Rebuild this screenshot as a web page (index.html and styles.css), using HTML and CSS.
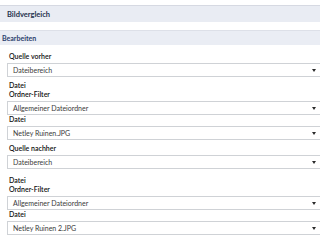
FILE: index.html
```html
<!DOCTYPE html>
<html lang="de">
<head>
<meta charset="utf-8">
<title>Bildvergleich</title>
<link rel="stylesheet" href="styles.css">
</head>
<body>
<div class="panel-head">Bildvergleich</div>
<div class="section-head">Bearbeiten</div>
<div class="form">
  <div class="field">
    <div class="lbl">Quelle vorher</div>
    <div class="select"><span>Dateibereich</span><svg class="chev" width="4" height="3" viewBox="0 0 4 3"><path d="M0 0 H4 L2 3 Z" fill="#2a2a2a"/></svg></div>
  </div>
  <div class="group">
    <div class="lbl">Datei</div>
    <div class="field">
      <div class="lbl">Ordner-Filter</div>
      <div class="select"><span>Allgemeiner Dateiordner</span><svg class="chev" width="4" height="3" viewBox="0 0 4 3"><path d="M0 0 H4 L2 3 Z" fill="#2a2a2a"/></svg></div>
    </div>
    <div class="field">
      <div class="lbl">Datei</div>
      <div class="select"><span>Netley Ruinen.JPG</span><svg class="chev" width="4" height="3" viewBox="0 0 4 3"><path d="M0 0 H4 L2 3 Z" fill="#2a2a2a"/></svg></div>
    </div>
  </div>
  <div class="field">
    <div class="lbl">Quelle nachher</div>
    <div class="select"><span>Dateibereich</span><svg class="chev" width="4" height="3" viewBox="0 0 4 3"><path d="M0 0 H4 L2 3 Z" fill="#2a2a2a"/></svg></div>
  </div>
  <div class="group group-last">
    <div class="lbl">Datei</div>
    <div class="field">
      <div class="lbl">Ordner-Filter</div>
      <div class="select"><span>Allgemeiner Dateiordner</span><svg class="chev" width="4" height="3" viewBox="0 0 4 3"><path d="M0 0 H4 L2 3 Z" fill="#2a2a2a"/></svg></div>
    </div>
    <div class="field">
      <div class="lbl">Datei</div>
      <div class="select"><span>Netley Ruinen 2.JPG</span><svg class="chev" width="4" height="3" viewBox="0 0 4 3"><path d="M0 0 H4 L2 3 Z" fill="#2a2a2a"/></svg></div>
    </div>
  </div>
</div>
</body>
</html>
```
FILE: styles.css
```css
html, body {
  margin: 0;
  padding: 0;
  background: #ffffff;
  overflow: hidden;
}
body {
  font-family: Lato, "Liberation Sans", sans-serif;
  font-size: 7px;
  color: #222;
}
.panel-head {
  margin-top: 5px;
  height: 16px;
  border-top: 1px solid #d6d9e2;
  background: #e9ecf3;
  padding-left: 7px;
  display: flex;
  align-items: center;
  font-weight: bold;
  font-size: 7.5px;
  color: #25314d;
}
.section-head {
  margin-top: 8px;
  height: 14px;
  border-top: 1px solid #dde0e8;
  background: #eaedf4;
  padding-left: 2px;
  display: flex;
  align-items: center;
  font-weight: bold;
  font-size: 7px;
  color: #2c3f6c;
}
.form {
  padding: 7px 0 0 7px;
}
.lbl {
  line-height: 9px;
  height: 9px;
  padding-left: 2px;
  font-weight: 600;
  color: #111;
}
.select {
  margin-top: 2px;
  height: 12px;
  border: 1px solid #cfd2d6;
  border-right: none;
  background: #fff;
  display: flex;
  align-items: center;
  justify-content: space-between;
  padding: 0 4px 0 5px;
  color: #3a3a3a;
}
.chev {
  display: block;
}
.group {
  margin-top: 4px;
}
.group-last {
  margin-top: 7px;
}
.group + .field {
  margin-top: 4px;
}
```
